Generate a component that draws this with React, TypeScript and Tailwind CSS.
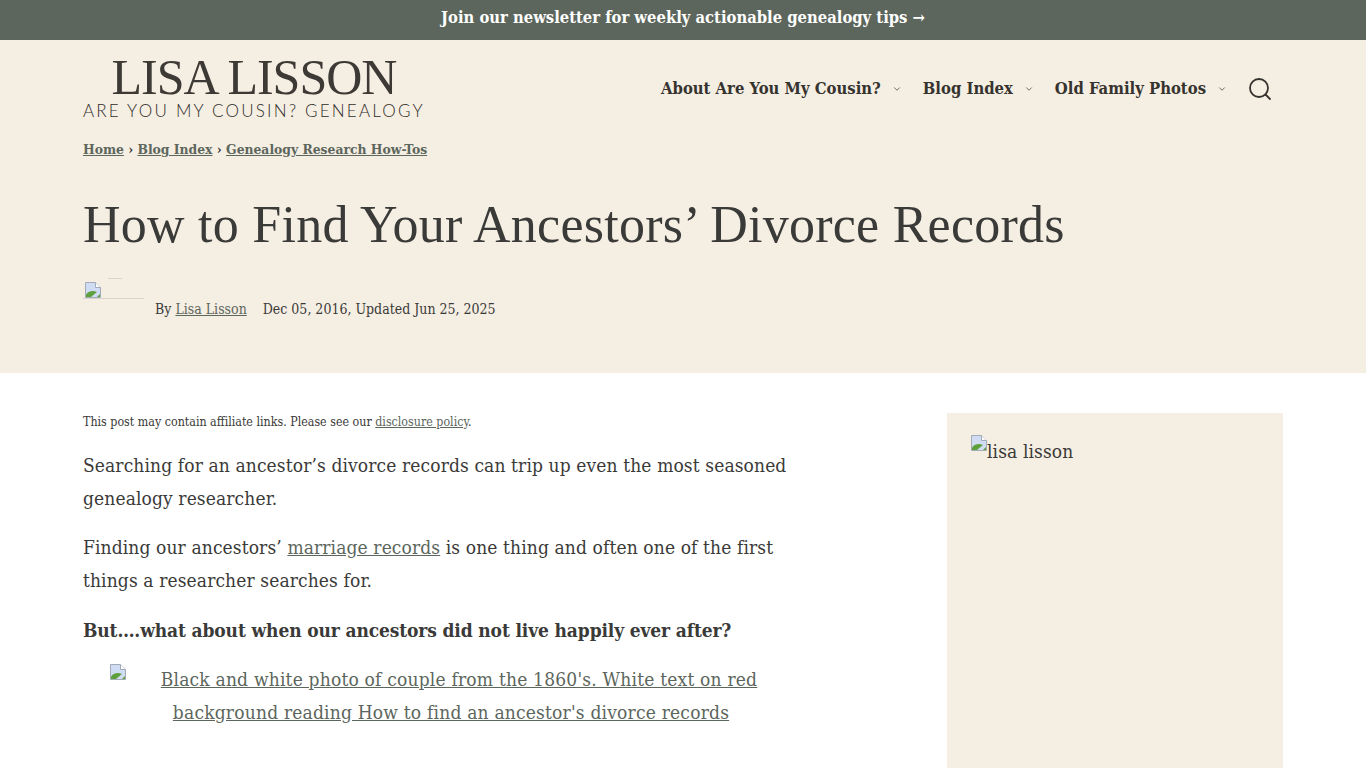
import React from 'react';
import { ChevronDown } from 'lucide-react';

const body = "font-['DejaVu_Serif_Condensed','DejaVu_Serif',serif]";

// browser's broken image glyph
const BrokenImage = () => (
  <svg width="16" height="16" viewBox="0 0 16 16" className="shrink-0">
    <path d="M0.5 0.5H10.5L15.5 5.5V15.5H0.5Z" fill="#cfdcf3" stroke="#a3abb8" />
    <path d="M10.5 0.5V5.5H15.5" fill="#fff" stroke="#a3abb8" />
    <path d="M1 15V12.5C4.5 8.5 8 8.5 12 10L6 15Z" fill="#5ea03c" />
    <path d="M12 15L15 12V15Z" fill="#5ea03c" />
  </svg>
);

const NavItem = ({ label }: { label: string }) => (
  <a className="flex items-center gap-[11px] font-bold text-[16.5px] text-[#36332f]">
    {label}
    <ChevronDown size={10} strokeWidth={2} className="text-[#56524c]" />
  </a>
);

const App: React.FC = () => {
  return (
    <div className={`h-screen overflow-hidden bg-white text-[#3a3a38] ${body}`}>
      <div className="h-10 bg-[#5c665c] flex items-center justify-center text-white font-bold text-[16.45px] pb-[3px]">
        Join our newsletter for weekly actionable genealogy tips →
      </div>

      <header className="bg-[#f5eee3] h-[333px]">
        <div className="w-[1200px] mx-auto">
          <div className="flex justify-between pt-[14px]">
            <div className="w-[341px] text-center">
              <div className="font-['Liberation_Serif',serif] text-[50px] leading-[46px] tracking-[-1px] text-[#3d3a35] ml-[1px]">LISA LISSON</div>
              <div className="font-['Lato',sans-serif] font-light text-[17px] leading-[20px] tracking-[2.2px] text-[#2f2d29] mt-[1px] whitespace-nowrap">
                ARE YOU MY COUSIN? GENEALOGY
              </div>
            </div>
            <nav className="flex items-center gap-[21px] pr-[11px] pt-[3px]">
              <NavItem label="About Are You My Cousin?" />
              <NavItem label="Blog Index" />
              <NavItem label="Old Family Photos" />
              <svg width="24" height="24" viewBox="0 0 24 24" fill="none" stroke="#36332f" strokeWidth="1.8" strokeLinecap="round">
                <circle cx="11" cy="11" r="9" />
                <path d="M17.5 17.5L22 22" />
              </svg>
            </nav>
          </div>

          <div className="mt-[18px] text-[13.75px] font-bold leading-5 text-[#5c665c]">
            <a className="underline">Home</a>
            <span className="text-[#3a3a38]"> › </span>
            <a className="underline">Blog Index</a>
            <span className="text-[#3a3a38]"> › </span>
            <a className="underline">Genealogy Research How-Tos</a>
          </div>

          <h1 className="mt-[36px] font-['Liberation_Serif',serif] text-[52px] leading-[60px] tracking-[0.25px] text-[#3a3a38]">
            How to Find Your Ancestors’ Divorce Records
          </h1>

          <div className="mt-[24px] flex items-end text-[14px]">
            <div className="relative w-[61px] h-5 border-b border-[#d9d4cc] mr-[11px] mb-[21px]">
              <div className="absolute left-[25px] top-[-1px] w-[14px] border-t border-[#d9d4cc]" />
              <div className="absolute left-[2px] top-[3px]"><BrokenImage /></div>
            </div>
            <div className="leading-5 pb-[1px]">
              By <a className="underline text-[#5c665c]">Lisa Lisson</a>
              <span className="ml-4">Dec 05, 2016, Updated Jun 25, 2025</span>
            </div>
          </div>
        </div>
      </header>

      <main className="w-[1200px] mx-auto flex justify-between pt-10">
        <article className="w-[736px]">
          <p className="text-[12.35px] leading-5 mt-[-1px]">
            This post may contain affiliate links. Please see our{' '}
            <a className="underline text-[#5c665c]">disclosure policy</a>.
          </p>
          <p className="text-[19px] tracking-[0.12px] leading-[33px] mt-[17px]">
            Searching for an ancestor’s divorce records can trip up even the most seasoned genealogy researcher.
          </p>
          <p className="text-[19px] tracking-[0.12px] leading-[33px] mt-4">
            Finding our ancestors’ <a className="underline text-[#5c665c]">marriage records</a> is one thing and often one of the first things a researcher searches for.
          </p>
          <p className="text-[19px] tracking-[-0.13px] leading-[33px] mt-[17px] font-bold">
            But….what about when our ancestors did not live happily ever after?
          </p>
          <div className="relative text-[19px] tracking-[0.2px] leading-[33px] mt-4 text-center text-[#5c665c] underline">
            <div className="absolute left-[27px] top-[1px]"><BrokenImage /></div>
            <div className="pl-4">Black and white photo of couple from the 1860's. White text on red</div>
            <div>background reading How to find an ancestor's divorce records</div>
          </div>
        </article>

        <aside className="w-[336px] h-[400px] bg-[#f5eee3] px-6 pt-[22px]">
          <div className="flex items-start text-[19px] tracking-[0.12px] leading-[33px]">
            <BrokenImage />
            <span>lisa lisson</span>
          </div>
        </aside>
      </main>
    </div>
  );
};

export default App;
